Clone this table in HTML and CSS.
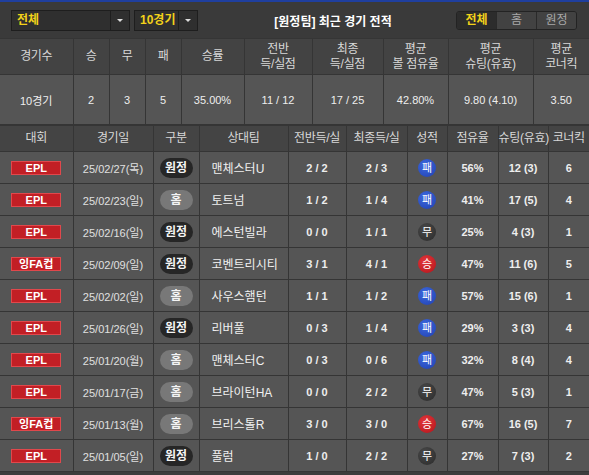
FILE: index.html
```html
<!DOCTYPE html>
<html lang="ko">
<head>
    <meta charset="UTF-8">
    <title>최근 경기 전적</title>
    <link rel="stylesheet" href="styles.css">
</head>
<body>

<div class="topbar">
    <div class="selects">
        <div class="select wide">
            <span class="select-text">전체</span>
            <span class="select-arrow"><i></i></span>
        </div>
        <div class="select narrow">
            <span class="select-text">10경기</span>
            <span class="select-arrow"><i></i></span>
        </div>
    </div>
    <div class="title">[원정팀] 최근 경기 전적</div>
    <div class="tabs">
        <span class="tab active">전체</span>
        <span class="tab">홈</span>
        <span class="tab">원정</span>
    </div>
</div>

<!-- 요약 -->
<table class="summary">
    <colgroup>
        <col style="width:73px"><col style="width:36px"><col style="width:36px"><col style="width:36px">
        <col style="width:63px"><col style="width:68px"><col style="width:71px"><col style="width:65px">
        <col style="width:85px"><col>
    </colgroup>
    <tr class="head">
        <th>경기수</th><th>승</th><th>무</th><th>패</th><th>승률</th>
        <th>전반<br>득/실점</th><th>최종<br>득/실점</th><th>평균<br>볼 점유율</th>
        <th>평균<br>슈팅(유효)</th><th>평균<br>코너킥</th>
    </tr>
    <tr class="data">
        <td>10경기</td><td>2</td><td>3</td><td>5</td><td>35.00%</td>
        <td>11 / 12</td><td>17 / 25</td><td>42.80%</td><td>9.80 (4.10)</td><td>3.50</td>
    </tr>
</table>

<!-- 경기 목록 -->
<table class="games">
    <colgroup>
        <col style="width:73px"><col style="width:80px"><col style="width:46px"><col style="width:89px">
        <col style="width:58px"><col style="width:61px"><col style="width:40px"><col style="width:51px">
        <col style="width:50px"><col>
    </colgroup>
    <thead>
        <tr>
            <th>대회</th><th>경기일</th><th>구분</th><th>상대팀</th><th>전반득/실</th>
            <th>최종득/실</th><th>성적</th><th>점유율</th><th>슈팅(유효)</th><th>코너킥</th>
        </tr>
    </thead>
    <tbody id="game-rows"></tbody>
</table>

<script>
    const games = [
        ['EPL', '25/02/27(목)', '원정', '맨체스터U', '2 / 2', '2 / 3', '패', '56%', '12 (3)', '6'],
        ['EPL', '25/02/23(일)', '홈', '토트넘', '1 / 2', '1 / 4', '패', '41%', '17 (5)', '4'],
        ['EPL', '25/02/16(일)', '원정', '에스턴빌라', '0 / 0', '1 / 1', '무', '25%', '4 (3)', '1'],
        ['잉FA컵', '25/02/09(일)', '원정', '코벤트리시티', '3 / 1', '4 / 1', '승', '47%', '11 (6)', '5'],
        ['EPL', '25/02/02(일)', '홈', '사우스햄턴', '1 / 1', '1 / 2', '패', '57%', '15 (6)', '1'],
        ['EPL', '25/01/26(일)', '원정', '리버풀', '0 / 3', '1 / 4', '패', '29%', '3 (3)', '4'],
        ['EPL', '25/01/20(월)', '홈', '맨체스터C', '0 / 3', '0 / 6', '패', '32%', '8 (4)', '4'],
        ['EPL', '25/01/17(금)', '홈', '브라이턴HA', '0 / 0', '2 / 2', '무', '47%', '5 (3)', '1'],
        ['잉FA컵', '25/01/13(월)', '홈', '브리스톨R', '3 / 0', '3 / 0', '승', '67%', '16 (5)', '7'],
        ['EPL', '25/01/05(일)', '원정', '풀럼', '1 / 0', '2 / 2', '무', '27%', '7 (3)', '2']
    ];
    const resultClass = { '승': 'win', '무': 'draw', '패': 'loss' };

    let rows = '';
    games.forEach(g => {
        rows += `
            <tr>
                <td><span class="league">${g[0]}</span></td>
                <td class="date">${g[1]}</td>
                <td><span class="venue ${g[2] === '홈' ? 'home' : 'away'}">${g[2]}</span></td>
                <td class="team">${g[3]}</td>
                <td class="num">${g[4]}</td>
                <td class="num">${g[5]}</td>
                <td><span class="result ${resultClass[g[6]]}">${g[6]}</span></td>
                <td class="num">${g[7]}</td>
                <td class="num">${g[8]}</td>
                <td class="num">${g[9]}</td>
            </tr>`;
    });
    document.getElementById('game-rows').innerHTML = rows;
</script>

</body>
</html>
```

FILE: styles.css
```css
/* 기본 */
body {
    margin: 0;
    background-color: #3c3c3c;
    font-family: 'Liberation Sans', 'Noto Sans CJK KR', sans-serif;
    font-size: 12px;
    color: #e6e6e6;
}

/* 상단 바 */
.topbar {
    display: flex;
    align-items: center;
    height: 36px;
    padding: 0 12px 0 11px;
    border-top: 2px solid #1f3f9f;
    background-color: #3a3a3a;
}

.selects {
    display: flex;
    gap: 4px;
}

.select {
    display: flex;
    height: 19px;
    border: 1px solid #1e1e1e;
    background-color: #2f2f2f;
}

.select.wide { width: 117px; }
.select.narrow { width: 62px; }

.select-text {
    flex: 1;
    padding-left: 5px;
    line-height: 19px;
    color: #f2d21a;
    font-weight: bold;
    font-size: 12px;
}

.select-arrow {
    display: flex;
    align-items: center;
    justify-content: center;
    width: 18px;
    border-left: 1px solid #1e1e1e;
}

.select-arrow i {
    width: 0;
    height: 0;
    border-left: 3px solid transparent;
    border-right: 3px solid transparent;
    border-top: 3px solid #ddd;
}

.title {
    flex: 1;
    text-align: center;
    color: #fff;
    font-weight: bold;
    font-size: 12px;
    padding-left: 12px;
}

.tabs {
    display: flex;
    border: 1px solid #232323;
    border-radius: 3px;
    overflow: hidden;
}

.tab {
    width: 39px;
    height: 17px;
    line-height: 17px;
    text-align: center;
    background-color: #424242;
    color: #a8a8a8;
    font-size: 12px;
    border-left: 1px solid #2a2a2a;
}

.tab:first-child { border-left: none; }

.tab.active {
    background-color: #2c2c2c;
    color: #f2d21a;
    font-weight: bold;
}

/* 표 공통 */
table {
    width: 100%;
    border-collapse: collapse;
    table-layout: fixed;
}

th, td {
    border: 1px solid #353535;
    text-align: center;
    padding: 0;
    white-space: nowrap;
}

th {
    background-color: #434343;
    color: #d8d8d8;
    font-weight: normal;
    font-size: 12px;
    letter-spacing: -0.3px;
}

/* 요약 */
.summary .head th {
    height: 35px;
    line-height: 15px;
}

.summary .data td {
    height: 49px;
    background-color: #555;
    font-size: 11px;
    color: #eee;
}

.summary tr > :first-child { border-left: none; }
.summary tr > :last-child { border-right: none; }

/* 경기 목록 */
.games th {
    height: 25px;
    line-height: 15px;
    background-color: #444;
}

.games tr > :first-child { border-left: none; }
.games tr > :last-child { border-right: none; }

.games td {
    height: 31px;
    background-color: #555;
    font-size: 11px;
    font-weight: bold;
    color: #eee;
}

.games td.date {
    font-weight: normal;
    color: #e0e0e0;
}

.games td.team {
    text-align: left;
    padding-left: 12px;
    font-weight: normal;
    font-size: 12px;
    color: #f0f0f0;
}

.league {
    display: inline-block;
    width: 48px;
    height: 12px;
    line-height: 12px;
    background-color: #c21f25;
    border: 1px solid #e0484c;
    color: #fff;
    font-size: 11px;
    font-weight: bold;
}

.venue {
    display: inline-block;
    width: 33px;
    height: 20px;
    line-height: 20px;
    border-radius: 10px;
    font-size: 12px;
    color: #f4f4f4;
}

.venue.away { background-color: #262626; }
.venue.home { background-color: #787878; }

.result {
    display: inline-block;
    width: 18px;
    height: 18px;
    line-height: 18px;
    border-radius: 50%;
    font-size: 11px;
    font-weight: normal;
    color: #fff;
}

.result.loss { background: radial-gradient(circle at 40% 35%, #3e6ae0, #1f3fae); }
.result.win { background: radial-gradient(circle at 40% 35%, #e5363b, #b0141a); }
.result.draw { background: radial-gradient(circle at 40% 35%, #4a4a4a, #2a2a2a); }
```
